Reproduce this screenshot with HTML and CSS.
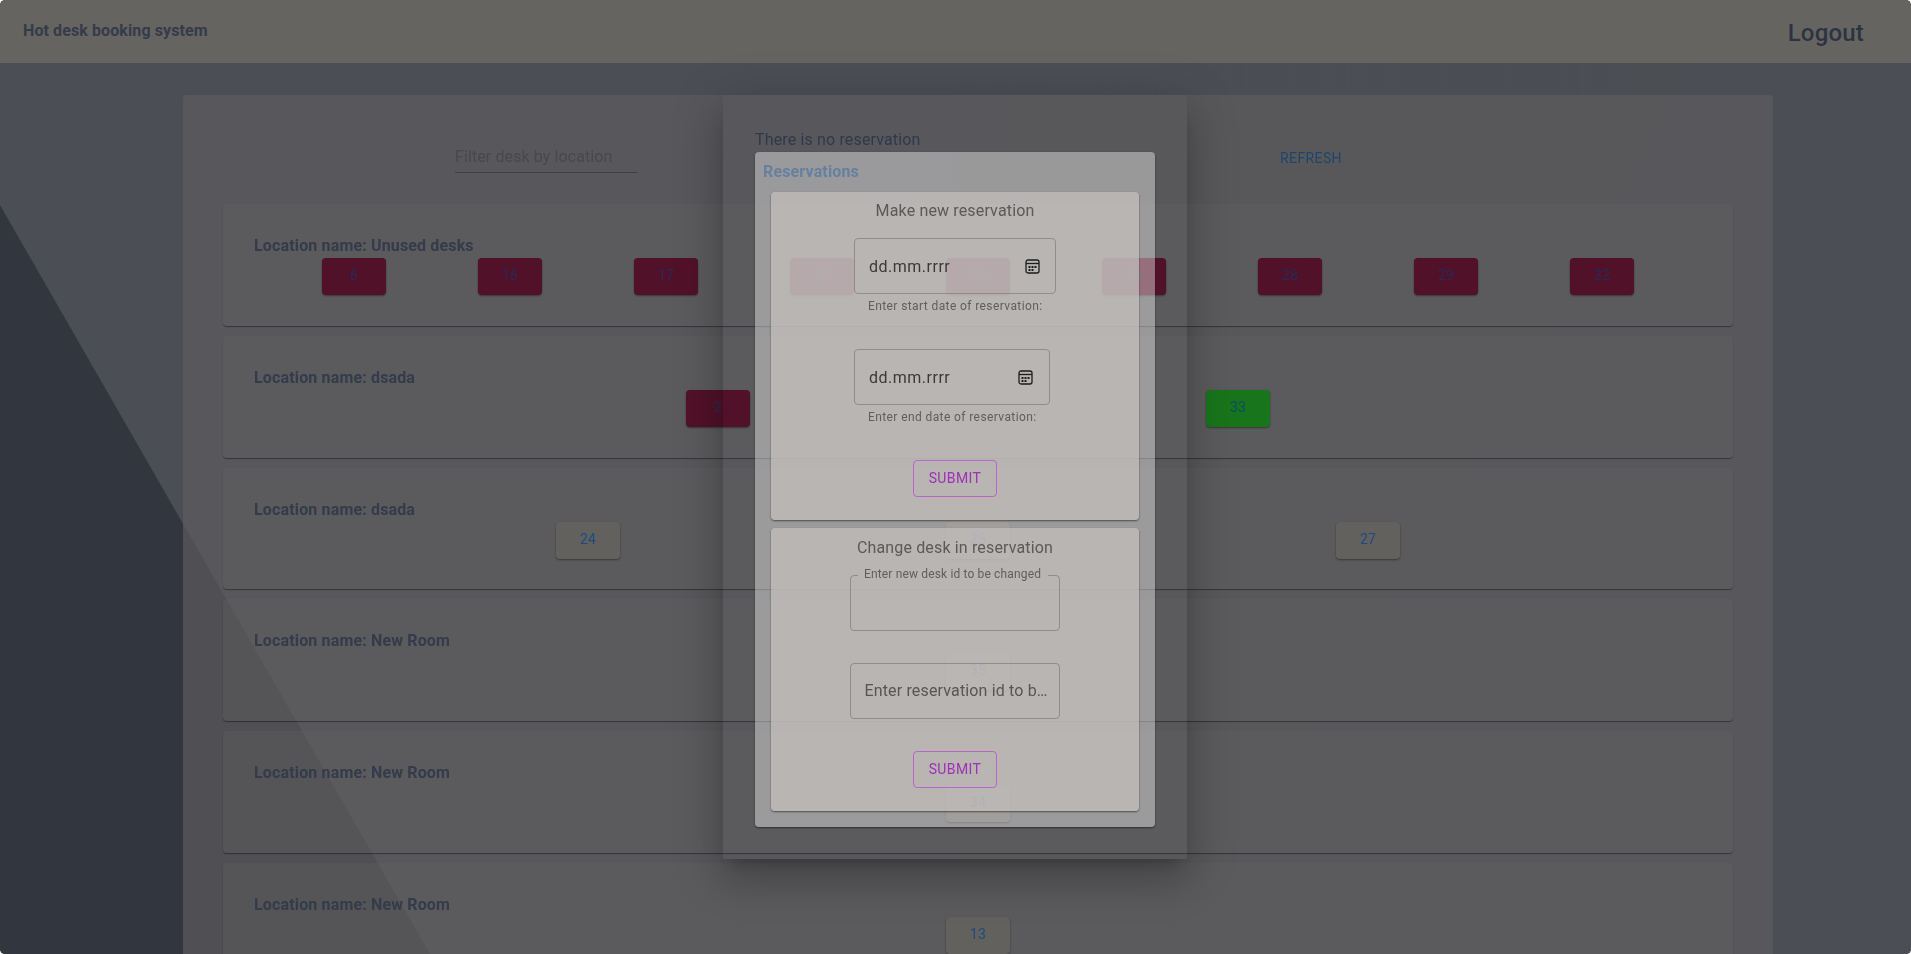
FILE: index.html
```html
<!DOCTYPE html>
<html lang="en">

<head>
    <meta charset="UTF-8">
    <title>Hot desk booking system</title>
    <link rel="stylesheet" href="styles.css">
</head>

<body>

    <header class="topbar">
        <h1 class="brand">Hot desk booking system</h1>
        <a class="logout">Logout</a>
    </header>

    <main class="paper">
        <div class="filters">
            <div class="filter_input">Filter desk by location</div>
            <a class="refresh">REFRESH</a>
        </div>

        <section class="location">
            <h2>Location name: Unused desks</h2>
            <div class="desks">
                <div class="desk taken">6</div>
                <div class="desk taken">16</div>
                <div class="desk taken">17</div>
                <div class="desk taken">22</div>
                <div class="desk taken">23</div>
                <div class="desk taken">26</div>
                <div class="desk taken">28</div>
                <div class="desk taken">29</div>
                <div class="desk taken">32</div>
            </div>
        </section>
        <section class="location">
            <h2>Location name: dsada</h2>
            <div class="desks">
                <div class="desk taken">2</div>
                <div class="desk free">33</div>
            </div>
        </section>
        <section class="location">
            <h2>Location name: dsada</h2>
            <div class="desks">
                <div class="desk">24</div>
                <div class="desk">25</div>
                <div class="desk">27</div>
            </div>
        </section>
        <section class="location">
            <h2>Location name: New Room</h2>
            <div class="desks">
                <div class="desk">35</div>
            </div>
        </section>
        <section class="location">
            <h2>Location name: New Room</h2>
            <div class="desks">
                <div class="desk">34</div>
            </div>
        </section>
        <section class="location">
            <h2>Location name: New Room</h2>
            <div class="desks">
                <div class="desk">13</div>
            </div>
        </section>
    </main>

    <!-- dialog over the desks -->
    <div class="modal">
        <p class="no_reservation">There is no reservation</p>
        <div class="reservations">
            <h3>Reservations</h3>

            <div class="form_card new_reservation">
                <div class="form_title">Make new reservation</div>
                <div class="date_group">
                    <div class="field date_start">
                        <span>dd.mm.rrrr</span>
                        <svg class="calendar" viewBox="0 0 15 15">
                            <rect x="1" y="1" width="13" height="13" rx="2" />
                            <path d="M1 4.5h13" />
                            <path class="dots" d="M3.5 7h2v2h-2zM6.5 7h2v2h-2zM9.5 7h2v2h-2zM3.5 10h2v2h-2zM6.5 10h2v2h-2z" />
                        </svg>
                    </div>
                    <div class="helper">Enter start date of reservation:</div>
                    <div class="field date_end">
                        <span>dd.mm.rrrr</span>
                        <svg class="calendar" viewBox="0 0 15 15">
                            <rect x="1" y="1" width="13" height="13" rx="2" />
                            <path d="M1 4.5h13" />
                            <path class="dots" d="M3.5 7h2v2h-2zM6.5 7h2v2h-2zM9.5 7h2v2h-2zM3.5 10h2v2h-2zM6.5 10h2v2h-2z" />
                        </svg>
                    </div>
                    <div class="helper">Enter end date of reservation:</div>
                </div>
                <div class="submit">SUBMIT</div>
            </div>

            <div class="form_card change_desk">
                <div class="form_title">Change desk in reservation</div>
                <fieldset class="outlined">
                    <legend>Enter new desk id to be changed</legend>
                </fieldset>
                <div class="field reservation_id">
                    <span class="placeholder">Enter reservation id to b…</span>
                </div>
                <div class="submit">SUBMIT</div>
            </div>
        </div>
    </div>

    <i class="corner top_left"></i>
    <i class="corner top_right"></i>
    <i class="corner bottom_left"></i>
    <i class="corner bottom_right"></i>

</body>

</html>
```
FILE: styles.css
```css
html {
    overflow: hidden;
}

body {
    margin: 0;
    height: 954px;
    overflow: hidden;
    background-color: #4c4e56;
    font-family: Roboto, "Liberation Sans", sans-serif;
    letter-spacing: 0.15px;
}

/* big shapes of the page background */
body::before {
    content: "";
    position: fixed;
    inset: 0;
    background-color: #32363f;
    clip-path: polygon(0 205px, 430px 954px, 0 954px);
}

body::after {
    content: "";
    position: fixed;
    inset: 0;
    background: linear-gradient(to right, transparent 50%, #4b4e53 85%);
    clip-path: polygon(0 0, 1735px 0, 1180px 954px, 0 954px);
}

.topbar,
.paper,
.modal {
    z-index: 1;
}

.topbar {
    position: relative;
    height: 63px;
    box-sizing: border-box;
    padding: 0 47px 0 23px;
    display: flex;
    justify-content: space-between;
    align-items: center;
    background-color: #666460;
}

.brand {
    margin: 0 0 1px 0;
    font-size: 16px;
    line-height: 24px;
    font-weight: 700;
    letter-spacing: 0.1px;
    color: #343b4a;
}

.logout {
    font-size: 24px;
    line-height: 32px;
    font-weight: 500;
    letter-spacing: 0.2px;
    color: #2c3443;
    margin-top: 3px;
}

.paper {
    position: relative;
    width: 1590px;
    height: 900px;
    box-sizing: border-box;
    margin: 32px 0 0 183px;
    padding: 0 40px;
    border-radius: 4px;
    background-color: rgba(95, 94, 95, 0.65);
}

.filters {
    height: 109px;
    box-sizing: border-box;
    padding: 0 0 0 232px;
    display: flex;
    align-items: flex-start;
    gap: 642px;
}

.filter_input {
    width: 183px;
    height: 78px;
    box-sizing: border-box;
    padding-top: 53px;
    border-bottom: 1px solid #3f3f3f;
    font-size: 16px;
    line-height: 18px;
    font-weight: 400;
    letter-spacing: 0.1px;
    color: #484848;
    white-space: nowrap;
}

.refresh {
    margin-top: 53px;
    font-size: 14px;
    line-height: 20px;
    font-weight: 400;
    letter-spacing: 0.4px;
    color: #1d466f;
}

.location {
    height: 121.75px;
    box-sizing: border-box;
    margin-bottom: 10px;
    padding: 30px 7px 0;
    border-radius: 4px;
    background-color: rgba(97, 96, 96, 0.35);
    box-shadow: 0 1px 1px rgba(0, 0, 0, 0.4);
}

.location h2 {
    margin: 0 0 0 24px;
    font-size: 16px;
    line-height: 24px;
    font-weight: 700;
    color: #343b4a;
}

.desks {
    display: flex;
    justify-content: space-evenly;
}

.desk {
    width: 64px;
    height: 37px;
    box-sizing: border-box;
    padding-bottom: 3px;
    display: flex;
    justify-content: center;
    align-items: center;
    border-radius: 4px;
    background-color: #63615e;
    box-shadow: 0 1px 2px rgba(0, 0, 0, 0.4);
    font-size: 14px;
    color: #1d4a80;
}

.taken {
    background-color: #511129;
    color: #262a5c;
}

.free {
    background-color: #18751b;
    color: #0d4a6c;
}

.modal {
    position: fixed;
    left: 723px;
    top: 95px;
    width: 464px;
    height: 764px;
    box-sizing: border-box;
    padding: 33px 32px 0;
    box-shadow: 0 11px 15px -7px rgba(0, 0, 0, 0.2), 0 24px 38px 3px rgba(0, 0, 0, 0.14), 0 9px 46px 8px rgba(0, 0, 0, 0.12);
}

.no_reservation {
    margin: 0;
    font-size: 16px;
    line-height: 24px;
    color: #2e3a4a;
}

.reservations {
    height: 675px;
    box-sizing: border-box;
    padding: 8px 16px 16px;
    border-radius: 4px;
    background-color: rgba(255, 253, 250, 0.4);
    box-shadow: 0 1px 2px rgba(0, 0, 0, 0.5);
}

.reservations h3 {
    margin: 0 0 8px -8px;
    font-size: 16px;
    line-height: 24px;
    font-weight: 700;
    color: #66809f;
}

.form_card {
    box-sizing: border-box;
    border-radius: 4px;
    background-color: rgba(193, 190, 187, 0.75);
    box-shadow: 0 1px 2px rgba(0, 0, 0, 0.5);
    display: flex;
    flex-direction: column;
    align-items: center;
}

.new_reservation {
    height: 328px;
    padding-top: 7px;
    margin-bottom: 8px;
}

.change_desk {
    height: 283px;
    padding-top: 8px;
}

.form_title {
    font-size: 16px;
    line-height: 24px;
    color: #5a5a5a;
}

.date_group {
    width: 202px;
    margin-top: 15px;
}

.field {
    height: 56px;
    box-sizing: border-box;
    display: flex;
    justify-content: space-between;
    align-items: center;
    padding: 0 14px;
    border: 1px solid #8f8c8a;
    border-radius: 4px;
    font-size: 16px;
    letter-spacing: 0.5px;
    color: #3a3a3a;
}

.date_start {
    width: 202px;
}

.date_end {
    width: 196px;
}

.calendar {
    width: 15px;
    height: 15px;
    margin-right: 1px;
    fill: none;
    stroke: #1d1d1d;
    stroke-width: 1.3;
}

.date_end .calendar {
    margin-right: 2px;
}

.calendar .dots {
    fill: #1d1d1d;
    stroke: none;
}

.helper {
    height: 20px;
    margin: 2px 0 33px 0;
    padding-left: 14px;
    font-size: 12px;
    line-height: 20px;
    letter-spacing: 0.4px;
    color: #5f5f5f;
    white-space: nowrap;
}

.submit {
    width: 84px;
    height: 37px;
    box-sizing: border-box;
    padding-bottom: 2px;
    display: flex;
    justify-content: center;
    align-items: center;
    border: 1px solid #b866cd;
    border-radius: 4px;
    font-size: 14px;
    letter-spacing: 0.4px;
    color: #a030b8;
}

.outlined {
    width: 210px;
    height: 64px;
    box-sizing: border-box;
    min-width: 0;
    margin: 7px 0 32px 0;
    padding: 0;
    border: 1px solid #8f8c8a;
    border-radius: 4px;
}

.outlined legend {
    margin-left: 7px;
    padding: 0 7px 2px 6px;
    font-size: 12px;
    line-height: 14px;
    letter-spacing: 0.15px;
    color: #5f5f5f;
    white-space: nowrap;
}

.reservation_id {
    width: 210px;
    margin-bottom: 32px;
    padding-left: 13.5px;
    padding-bottom: 2px;
}

.placeholder {
    letter-spacing: 0.15px;
    color: #565656;
    white-space: nowrap;
    font-weight: 400;
}

/* tiny white rounded corners of the capture */
.corner {
    position: fixed;
    z-index: 2;
    width: 4px;
    height: 4px;
}

.top_left {
    left: 0;
    top: 0;
    background: radial-gradient(circle at 100% 100%, transparent 3.5px, #fff 4px);
}

.top_right {
    right: 0;
    top: 0;
    background: radial-gradient(circle at 0 100%, transparent 3.5px, #fff 4px);
}

.bottom_left {
    left: 0;
    bottom: 0;
    background: radial-gradient(circle at 100% 0, transparent 3.5px, #fff 4px);
}

.bottom_right {
    right: 0;
    bottom: 0;
    background: radial-gradient(circle at 0 0, transparent 3.5px, #fff 4px);
}
```
